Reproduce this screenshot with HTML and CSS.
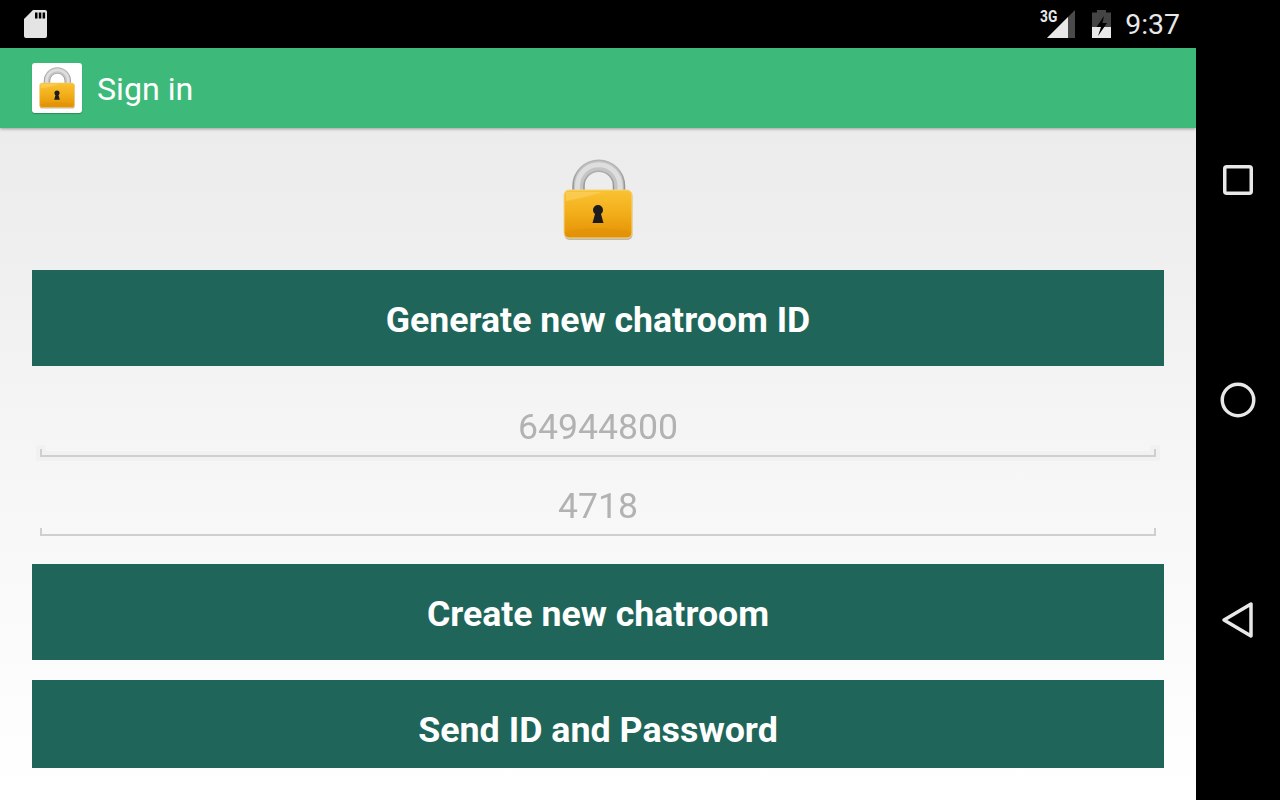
FILE: index.html
```html
<!DOCTYPE html>
<html lang="en">
<head>
<meta charset="utf-8">
<title>Sign in</title>
<link rel="stylesheet" href="styles.css">
</head>
<body>
<svg class="defs" width="0" height="0" aria-hidden="true">
  <defs>
    <linearGradient id="body" x1="0" y1="0" x2="0" y2="1">
      <stop offset="0" stop-color="#fac233"/>
      <stop offset=".45" stop-color="#f3b01c"/>
      <stop offset=".8" stop-color="#e99c0b"/>
      <stop offset="1" stop-color="#e5950a"/>
    </linearGradient>
    <linearGradient id="metal" x1="0" y1="0" x2="0" y2="1">
      <stop offset="0" stop-color="#b5b5b5"/>
      <stop offset="1" stop-color="#8c8c8c"/>
    </linearGradient>
    <symbol id="lock" viewBox="0 0 70 82">
      <path d="M15.500 34V27a20.250 20.250 0 0 1 40.500 0v7" fill="none" stroke="url(#metal)" stroke-width="12.500"/>
      <path d="M15.500 34V27a20.250 20.250 0 0 1 40.500 0v7" fill="none" stroke="#c4c4c4" stroke-width="9.500"/>
      <path d="M14.500 34V27a21.250 21.250 0 0 1 42.500 0v7" fill="none" stroke="#dedede" stroke-width="5"/>
      <rect x="1.500" y="32" width="68" height="49" rx="5" fill="#bdb9a8"/>
      <rect x="1" y="31" width="68" height="48" rx="5" fill="url(#body)" stroke="#f5d488" stroke-width="1"/>
      <path d="M3 33h36C28 37 14 40 3 42z" fill="#ffe9a0" opacity=".3"/>
      <path d="M2 73c20-5 46-5 66 0v1a4 4 0 0 1-4 4H6a4 4 0 0 1-4-4z" fill="#dc8c05" opacity=".4"/>
      <path d="M30 51a5 5 0 1 1 10 0c0 2-1 3-2 4l2.500 9h-11l2.500-9c-1-1-2-2-2-4z" fill="#1c1c1c"/>
    </symbol>
  </defs>
</svg>
<div class="screen">
  <main class="app">
    <div class="status">
      <svg class="sd" viewBox="0 0 23 28" width="23" height="28">
        <path d="M9 0h12a2 2 0 0 1 2 2v24a2 2 0 0 1-2 2H2a2 2 0 0 1-2-2V9z" fill="#e4e4e4"/>
        <path d="M11 2.500h2.500v6H11zM14.800 2.500h2.500v6h-2.500zM18.600 2.500h2.500v6h-2.500z" fill="#000"/>
      </svg>
      <div class="status-right">
        <div class="signal">
          <span class="net">3G</span>
          <svg viewBox="0 0 28 28" width="28" height="28" class="bars">
            <path d="M0 28L28 0v28z" fill="#4a4a4a"/>
            <path d="M0 28L21 7v21z" fill="#e8e8e8"/>
          </svg>
        </div>
        <svg class="battery" viewBox="0 0 19 28" width="19" height="28">
          <path d="M5 0h9v2.500h5V28H0V2.500h5z" fill="#444"/>
          <path d="M0 17h19v11H0z" fill="#e8e8e8"/>
          <path d="M12 6L4.500 17h4.500L6 26 15 13h-4.500z" fill="#000"/>
        </svg>
        <span class="clock">9:37</span>
      </div>
    </div>
    <header class="appbar">
      <div class="tile">
        <svg class="tile-lock" width="36" height="42"><use href="#lock"/></svg>
      </div>
      <h1 class="title">Sign in</h1>
    </header>
    <section class="content">
      <svg class="hero-lock" width="70" height="82"><use href="#lock"/></svg>
      <button class="btn btn-first" type="button">Generate new chatroom ID</button>
      <div class="field field-first"><span class="glow"></span><span class="line"></span><span class="value">64944800</span></div>
      <div class="field"><span class="line"></span><span class="value">4718</span></div>
      <button class="btn btn-create" type="button">Create new chatroom</button>
      <button class="btn btn-send" type="button">Send ID and Password</button>
    </section>
  </main>
  <nav class="navbar">
    <svg class="nav-recent" width="32" height="32" viewBox="0 0 32 32"><rect x="2.750" y="2.750" width="26.500" height="26.500" rx="2" fill="none" stroke="#e8e8e8" stroke-width="3.500"/></svg>
    <svg class="nav-home" width="36" height="36" viewBox="0 0 36 36"><circle cx="18" cy="18" r="15.750" fill="none" stroke="#e8e8e8" stroke-width="3.500"/></svg>
    <svg class="nav-back" width="34" height="38" viewBox="0 0 34 38"><path d="M30 3v32L3 19z" fill="none" stroke="#e8e8e8" stroke-width="3.500" stroke-linejoin="round"/></svg>
  </nav>
</div>
</body>
</html>
```
FILE: styles.css
```css
* { box-sizing: border-box; }
html, body { margin: 0; padding: 0; height: 800px; overflow: hidden; background: #000; }
body { font-family: Roboto, "Liberation Sans", sans-serif; }
.defs { display: block; height: 0; }
.screen { display: flex; width: 1280px; height: 800px; }
.app { display: flex; flex-direction: column; width: 1196px; height: 800px; }

.status { position: relative; z-index: 2; width: 1280px; height: 48px; flex: none; background: #000; display: flex; align-items: center; justify-content: space-between; padding: 0 100px 0 24px; }
.sd { display: block; }
.status-right { display: flex; align-items: center; }
.signal { width: 35px; margin-right: 17px; position: relative; height: 28px; }
.net { position: absolute; left: 0; top: -1px; font-size: 16px; font-weight: 700; line-height: 16px; color: #e8e8e8; transform: scaleX(.86); transform-origin: left; }
.bars { position: absolute; left: 7px; top: 0; }
.battery { margin-right: 14px; }
.clock { font-size: 28.400px; line-height: 48px; color: #e8e8e8; margin-top: 2px; }

.appbar { flex: none; height: 80px; background: #3dba7a; display: flex; align-items: center; padding-left: 32px; box-shadow: 0 1px 3px rgba(0,0,0,.35); position: relative; z-index: 1; }
.tile { width: 50px; height: 50px; background: #fff; border-radius: 3px; display: flex; align-items: center; justify-content: center; box-shadow: 0 1px 1px rgba(0,0,0,.25); margin-right: 15px; }
.tile-lock { display: block; }
.title { margin: 0; font-size: 32.200px; font-weight: 400; color: #fff; line-height: 40px; padding-top: 2px; }

.content { flex: 1; display: flex; flex-direction: column; align-items: stretch; padding: 31px 32px 0; background: linear-gradient(180deg, #ececec 0%, #eeeeee 15%, #f5f5f5 45%, #ffffff 100%); }
.hero-lock { display: block; flex: none; align-self: center; }
.btn { display: block; flex: none; width: 100%; height: 96px; border: 0; border-radius: 0; background: #1f6559; color: #fff; font-family: inherit; font-size: 35.650px; font-weight: 700; padding: 4px 0 0; }
.btn-first { margin-top: 29px; }
.btn-create { margin-top: 28px; }
.btn-send { margin-top: 20px; height: 88px; padding-top: 11px; font-size: 35.800px; }

.field { position: relative; height: 79px; margin: 0 8px; display: flex; align-items: flex-end; justify-content: center; padding-bottom: 8px; }
.field-first { height: 91px; }
.line { position: absolute; left: 0; right: 0; bottom: 0; height: 8px; border: 2px solid #cfcfcf; border-top: 0; }
.glow { position: absolute; left: -4px; right: -4px; bottom: -4px; height: 10px; background: #f1f1f1; border-radius: 2px; }
.glow::before, .glow::after { content: ""; position: absolute; bottom: 4px; width: 10px; height: 12px; background: #f1f1f1; border-radius: 3px; }
.glow::before { left: 0; }
.glow::after { right: 0; }
.value { font-size: 35.600px; line-height: 44px; color: #b2b2b2; position: relative; will-change: transform; }

.navbar { width: 84px; height: 800px; flex: none; background: #000; display: flex; flex-direction: column; align-items: center; padding-top: 164px; }
.nav-home { margin-top: 186px; }
.nav-back { margin-top: 183px; }
```
